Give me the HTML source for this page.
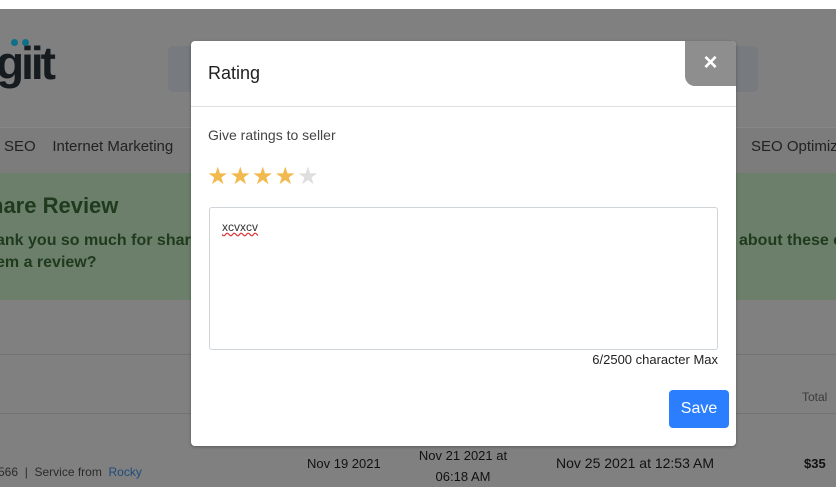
<!DOCTYPE html>
<html><head><style>
*{margin:0;padding:0;box-sizing:border-box}
body{width:836px;height:484px;overflow:hidden;position:relative;background:#808080;font-family:"Liberation Sans",sans-serif}
.abs{position:absolute}
</style></head><body>
<div class="abs" style="left:0;top:0;width:836px;height:9px;background:#fff"></div>
<div class="abs" style="left:0;top:9px;width:836px;height:118px;background:#808080"></div>
<div class="abs" style="left:-4px;top:38px;font:bold 46px/50px 'Liberation Sans',sans-serif;color:#151b1f;letter-spacing:-3px">giit</div>
<div class="abs" style="left:11px;top:39px;width:7px;height:7px;border-radius:50%;background:#0e6f86"></div>
<div class="abs" style="left:22px;top:39px;width:7px;height:7px;border-radius:50%;background:#0e6f86"></div>
<div class="abs" style="left:168px;top:46px;width:590px;height:46px;border-radius:5px;background:#777a7e"></div>
<div class="abs" style="left:0;top:127px;width:836px;height:46px;background:#7c7c7c;border-top:1px solid #888"></div>
<div class="abs" style="left:4px;top:138px;font-size:15px;color:#222">SEO&nbsp;&nbsp;&nbsp;&nbsp;Internet Marketing</div>
<div class="abs" style="left:751px;top:138px;font-size:15px;color:#222;white-space:nowrap">SEO Optimiz</div>
<div class="abs" style="left:0;top:173px;width:836px;height:127px;background:#6b7f6a"></div>
<div class="abs" style="left:-10px;top:193px;font:bold 22px 'Liberation Sans',sans-serif;color:#1f3a1d">hare Review</div>
<div class="abs" style="left:-4px;top:230px;font:bold 16px/22px 'Liberation Sans',sans-serif;color:#1f3a1d">ank you so much for shar<br>em a review?</div>
<div class="abs" style="left:739px;top:230px;font:bold 16px/22px 'Liberation Sans',sans-serif;color:#1f3a1d;white-space:nowrap">about these c</div>
<div class="abs" style="left:0;top:354px;width:836px;height:1px;background:#737373"></div>
<div class="abs" style="left:0;top:413px;width:836px;height:1px;background:#737373"></div>
<div class="abs" style="left:802px;top:390px;font-size:12px;color:#3a3a3a">Total</div>
<div class="abs" style="left:-2px;top:465px;font-size:12px;color:#2a2a2a">566 &nbsp;| &nbsp;Service from &nbsp;<span style="color:#1d4a7a">Rocky</span></div>
<div class="abs" style="left:307px;top:456px;font-size:13px;color:#111">Nov 19 2021</div>
<div class="abs" style="left:418px;top:445px;font-size:13px;line-height:21px;color:#111;text-align:center;width:90px">Nov 21 2021 at<br>06:18 AM</div>
<div class="abs" style="left:556px;top:455px;font-size:14px;color:#111">Nov 25 2021 at 12:53 AM</div>
<div class="abs" style="left:804px;top:456px;font:bold 13px 'Liberation Sans',sans-serif;color:#111">$35</div>
<div class="abs" style="left:191px;top:41px;width:545px;height:405px;background:#fff;border-radius:4px;box-shadow:0 1px 3px rgba(0,0,0,.3)">
 <div class="abs" style="left:17px;top:22px;font-size:18px;color:#222">Rating</div>
 <div class="abs" style="left:0;top:65px;width:545px;height:1px;background:#dde0e3"></div>
 <div class="abs" style="left:494px;top:0;width:51px;height:45px;background:#8e8e8e;border-radius:0 4px 0 10px;color:#fff;font:bold 24px/43px 'Liberation Sans',sans-serif;text-align:center">×</div>
 <div class="abs" style="left:17px;top:86px;font-size:14px;color:#444">Give ratings to seller</div>
 <div class="abs" style="left:16px;top:121px;font-size:24px;letter-spacing:1px;color:#f2b94f">★★★★<span style="color:#dedede">★</span></div>
 <div class="abs" style="left:18px;top:166px;width:509px;height:143px;border:1px solid #cfd4d9;border-radius:3px"></div>
 <div class="abs" style="left:31px;top:179px;font-size:12px;color:#333;text-decoration:underline wavy #d33">xcvxcv</div>
 <div class="abs" style="right:18px;top:311px;font-size:13px;color:#222">6/2500 character Max</div>
 <div class="abs" style="left:478px;top:349px;width:60px;height:38px;background:#2b7ffe;border-radius:4px;color:#fff;font-size:16px;line-height:38px;text-align:center">Save</div>
</div>
</body></html>
